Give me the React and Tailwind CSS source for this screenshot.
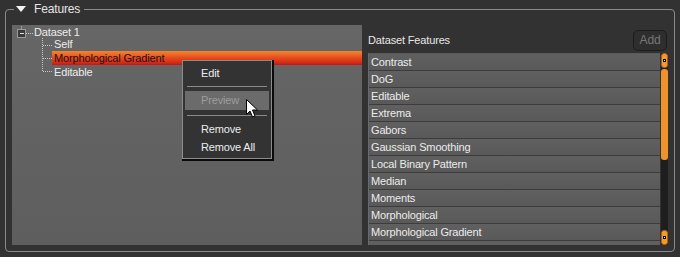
import React from "react";

const features = [
  "Contrast",
  "DoG",
  "Editable",
  "Extrema",
  "Gabors",
  "Gaussian Smoothing",
  "Local Binary Pattern",
  "Median",
  "Moments",
  "Morphological",
  "Morphological Gradient",
  "",
];

const font = { fontFamily: '"Liberation Sans", Arial, sans-serif', letterSpacing: "-0.15px" };

function TreeLines() {
  return (
    <svg className="absolute left-0 top-0" width="60" height="60" shapeRendering="crispEdges">
      {/* expander box */}
      <rect x="5.5" y="4.5" width="8" height="8" fill="#3a3a3a" stroke="#9a9a9a" />
      <line x1="7.5" y1="8.5" x2="12" y2="8.5" stroke="#e0e0e0" />
      <line x1="9.5" y1="1" x2="9.5" y2="4" stroke="#9a9a9a" />
      <g stroke="#c8c8c8" strokeDasharray="1 1">
        <line x1="14" y1="8.5" x2="21" y2="8.5" />
        <line x1="30.5" y1="13" x2="30.5" y2="47" />
        <line x1="31" y1="20.5" x2="40" y2="20.5" />
        <line x1="31" y1="33.5" x2="40" y2="33.5" />
        <line x1="31" y1="46.5" x2="40" y2="46.5" />
      </g>
    </svg>
  );
}

function Cursor() {
  return (
    <svg className="absolute left-[246px] top-[99px]" width="13" height="20" viewBox="0 0 13 20">
      <path
        d="M0.5 0.5 L0.5 15.5 L4 12 L6.5 18 L9 17 L6.5 11 L11.5 11 Z"
        fill="#fff"
        stroke="#000"
        strokeWidth="1"
      />
    </svg>
  );
}

function ContextMenu() {
  return (
    <div className="absolute left-[182px] top-[60px] w-[90px] h-[99px] bg-[#333] border border-[#8c8c8c] shadow-[1px_1px_0_1px_#0a0a0a] flex flex-col px-[2px] text-[11px] text-[#ececec]">
      <div className="h-[25px] flex items-center pl-[16px]">Edit</div>
      <div className="mx-[2px] h-px bg-[#8a8a8a]" />
      <div className="mt-[4px] h-[19px] bg-[#6b6b6b] flex items-center pl-[16px] text-[#9d9d9d]">Preview</div>
      <div className="mt-[5px] mx-[2px] h-px bg-[#8a8a8a]" />
      <div className="mt-[4px] h-[18px] flex items-center pl-[16px]">Remove</div>
      <div className="h-[19px] flex items-center pl-[16px]">Remove All</div>
    </div>
  );
}

function ScrollArrow() {
  return (
    <div className="h-[15px] rounded-[3px] bg-[#f39a2e] border border-[#b06010] flex items-center justify-center">
      <div className="w-[3px] h-[3px] bg-black flex items-center justify-center">
        <div className="w-px h-px bg-white" />
      </div>
    </div>
  );
}

export default function App() {
  return (
    <div className="w-[680px] h-[257px] bg-[#323232] pt-[9px] pl-[5px] relative overflow-hidden" style={font}>
      {/* group box */}
      <div className="relative w-[670px] h-[243px] border border-[#8a8a8a] rounded-[4px] flex pt-[15px] pl-[6px]">
        <div className="absolute left-[8px] -top-[8px] flex items-center gap-[8px] bg-[#323232] pl-[2px] pr-[4px] h-[14px]">
          <svg width="10" height="6" viewBox="0 0 10 6">
            <path d="M0 0 L10 0 L5 6 Z" fill="#f2f2f2" />
          </svg>
          <span className="text-[12px] text-[#e6e6e6] leading-none">Features</span>
        </div>

        {/* tree panel */}
        <div className="relative w-[350px] h-[220px] bg-gradient-to-b from-[#666] to-[#5e5e5e] text-[11px] text-[#ececec] leading-none">
          <TreeLines />
          <div className="flex flex-col pt-[1px]">
            <div className="h-[12px] flex items-center pl-[22px]">Dataset 1</div>
            <div className="h-[13px] flex items-center pl-[42px]">Self</div>
            <div className="h-[14px] ml-[40px] flex items-center pl-[2px] bg-gradient-to-b from-[#f3852e] via-[#e44a1d] to-[#cc1010] text-[#1c1010]">
              Morphological Gradient
            </div>
            <div className="h-[14px] flex items-center pl-[42px]">Editable</div>
          </div>
        </div>

        {/* dataset features */}
        <div className="ml-[6px] w-[300px] flex flex-col">
          <div className="h-[28px] flex items-center justify-between pt-[2px]">
            <span className="text-[11px] text-[#e8e8e8]">Dataset Features</span>
            <div className="mr-[1px] w-[34px] h-[21px] rounded-[5px] border border-[#1c1c1c] bg-[#2e2e2e] flex items-center justify-center text-[12px] text-[#777]">
              Add
            </div>
          </div>
          <div className="flex h-[192px]">
            <div className="w-[292px] h-full overflow-hidden bg-[#5a5a5a] border-l border-[#6a6a6a] pt-px">
              {features.map((f, i) => (
                <div
                  key={i}
                  className="h-[17px] border-b border-[#3c3c3c] bg-gradient-to-b from-[#606060] to-[#595959] flex items-center pl-[2px] text-[11px] text-[#ececec]"
                >
                  {f}
                </div>
              ))}
            </div>
            <div className="ml-[1px] w-[7px] h-full bg-[#1e1e1e] flex flex-col">
              <ScrollArrow />
              <div className="mt-[1px] h-[91px] rounded-[3px] bg-[#f0922a]" />
              <div className="flex-1" />
              <ScrollArrow />
            </div>
          </div>
        </div>
      </div>

      <ContextMenu />
      <Cursor />
    </div>
  );
}
